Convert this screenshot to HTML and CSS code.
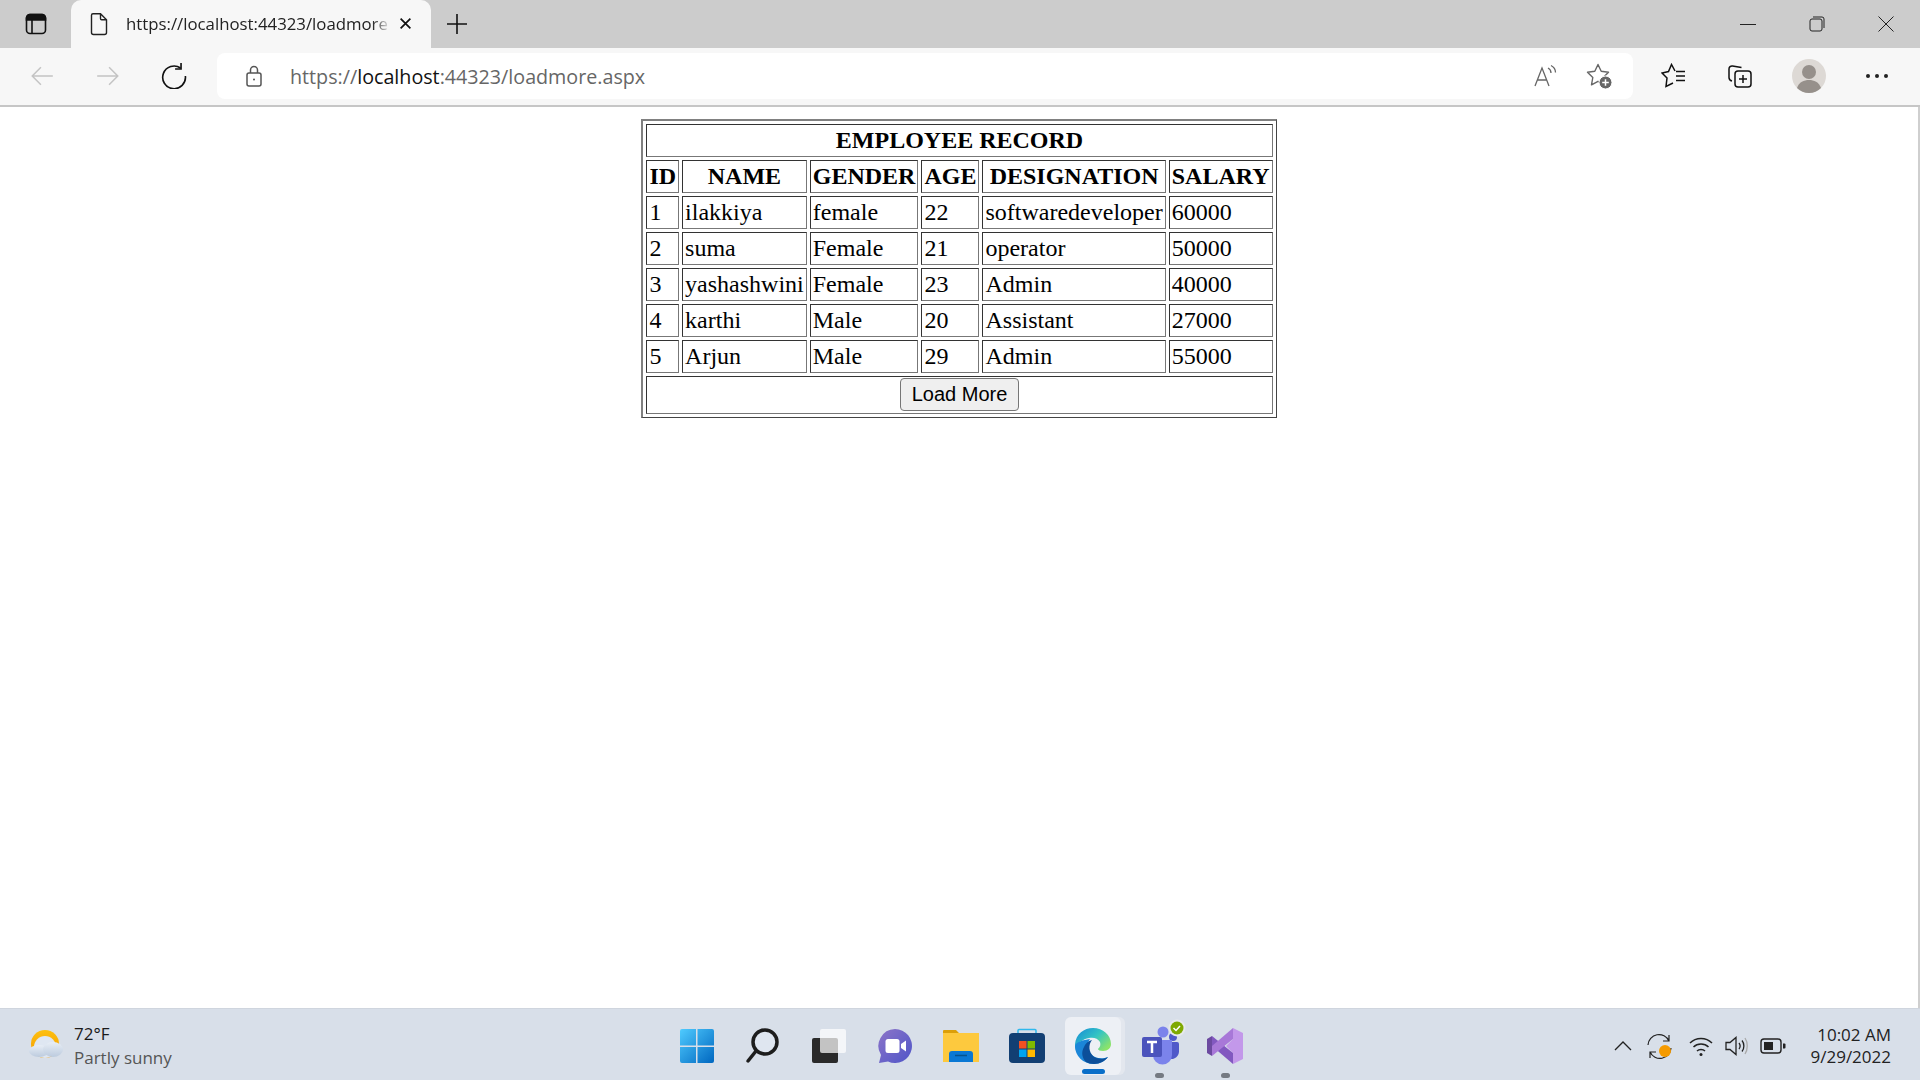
FILE: index.html
```html
<!DOCTYPE html>
<html lang="en">
<head>
<meta charset="utf-8">
<title>Load More</title>
<link rel="stylesheet" href="styles.css">
</head>
<body>
<div class="window">
  <header class="tabstrip">
    <div class="tab-actions">
      <svg class="ico-24" viewBox="0 0 24 24" fill="none" stroke="#111" stroke-width="1.6"><rect x="2.500" y="2.500" width="19" height="19" rx="3.500"/><path d="M2.500 6a3.500 3.500 0 0 1 3.500-3.500h12a3.500 3.500 0 0 1 3.500 3.500v2h-19z" fill="#111"/><path d="M8 8v13.500"/></svg>
    </div>
    <div class="tab">
      <svg class="ico-24 tab-doc" viewBox="0 0 24 24" fill="none" stroke="#222" stroke-width="1.4"><path d="M6 1.700h7.500L19.500 7.700V20.500a2 2 0 0 1-2 2H6.500a2 2 0 0 1-2-2V3.200a1.500 1.500 0 0 1 1.500-1.500zM13.500 1.700V6.500a1.200 1.200 0 0 0 1.200 1.200H19.500"/></svg>
      <span class="tab-title">https://localhost:44323/loadmore</span>
      <svg class="ico-close" viewBox="0 0 12 12" fill="none" stroke="#111" stroke-width="1.6"><path d="M1.500 1.500l9 9M10.500 1.500l-9 9"/></svg>
    </div>
    <svg class="ico-new" viewBox="0 0 24 24" fill="none" stroke="#111" stroke-width="1.6"><path d="M12 2v20M2 12h20"/></svg>
    <div class="win-controls">
      <svg class="win-ico" viewBox="0 0 16 16" fill="none" stroke="#222" stroke-width="1"><path d="M0 8.500h16"/></svg>
      <svg class="win-ico" viewBox="0 0 16 16" fill="none" stroke="#222" stroke-width="1"><rect x="1" y="3" width="12" height="12" rx="2"/><path d="M4 1h9a2 2 0 0 1 2 2v9"/></svg>
      <svg class="win-ico" viewBox="0 0 16 16" fill="none" stroke="#222" stroke-width="1"><path d="M.5.500l15 15M15.500.500l-15 15"/></svg>
    </div>
  </header>
  <nav class="toolbar">
    <svg class="tool tool-dim" viewBox="0 0 24 24" fill="none" stroke="#c4c4c4" stroke-width="1.4"><path d="M22 12H3M11 4l-8 8 8 8"/></svg>
    <svg class="tool tool-dim" viewBox="0 0 24 24" fill="none" stroke="#c4c4c4" stroke-width="1.4"><path d="M2 12h19M13 4l8 8-8 8"/></svg>
    <svg class="tool" viewBox="0 0 24 24" fill="none" stroke="#111" stroke-width="1.500"><path d="M18 4.600A10.500 10.500 0 1 0 22.500 12"/><path d="M18.500 0v5.500H13"/></svg>
    <div class="addressbar">
      <svg class="lock" viewBox="0 0 20 24" fill="none" stroke="#555" stroke-width="1.500"><rect x="3" y="9" width="14" height="13" rx="2"/><path d="M6.500 9V6a3.500 3.500 0 0 1 7 0v3"/><circle cx="10" cy="15.500" r="1" fill="#555" stroke="none"/></svg>
      <div class="url"><span class="dim">https://</span>localhost<span class="dim">:44323/loadmore.aspx</span></div>
      <svg class="tool-in" viewBox="0 0 26 26" fill="none" stroke="#666" stroke-width="1.300"><path d="M2 23L9 5l7 18M4.500 17h9"/><path d="M15 5c2 1 3 3 3 5M18 2.500c3 1.500 4.500 4 4.500 7"/></svg>
      <svg class="tool-in" viewBox="0 0 26 26" fill="none" stroke="#666" stroke-width="1.400"><path d="M12 1.500l3.200 6.800 7.300 1-5.300 5.200 1.300 7.300-6.500-3.500-6.500 3.500 1.300-7.300L1.500 9.300l7.300-1z" stroke-linejoin="round"/><circle cx="19.500" cy="19.500" r="6.500" fill="#666" stroke="#fff" stroke-width="1"/><path d="M19.500 16.200v6.600M16.200 19.500h6.600" stroke="#fff" stroke-width="1.500"/></svg>
    </div>
    <svg class="tool tool-r1" viewBox="0 0 26 26" fill="none" stroke="#111" stroke-width="1.500"><path d="M14 8L10.500 1.500 7.500 8.500 1 10l5 5-1 8.500 7-3.500"/><path d="M15 8.500h9M15 13h9M15 17.500h9"/></svg>
    <svg class="tool tool-r2" viewBox="0 0 26 26" fill="none" stroke="#111" stroke-width="1.500"><path d="M5 18c-2-.500-3-2-3-3.500V6a3 3 0 0 1 3.500-3l9 1.500"/><rect x="8" y="8" width="16" height="16" rx="3"/><path d="M16 12v8M12 16h8"/></svg>
    <div class="avatar"><svg viewBox="0 0 34 34"><circle cx="17" cy="17" r="17" fill="#ddd9d5"/><circle cx="17" cy="13" r="7" fill="#96908b"/><path d="M5 29c2-6 7-8 12-8s10 2 12 8a17 17 0 0 1-24 0z" fill="#96908b"/></svg></div>
    <div class="dots"><i></i><i></i><i></i></div>
  </nav>
  <main class="page">
    <table class="records">
      <tr><th colspan="6">EMPLOYEE RECORD</th></tr>
      <tr><th>ID</th><th>NAME</th><th>GENDER</th><th>AGE</th><th>DESIGNATION</th><th>SALARY</th></tr>
      <tr><td>1</td><td>ilakkiya</td><td>female</td><td>22</td><td>softwaredeveloper</td><td>60000</td></tr>
      <tr><td>2</td><td>suma</td><td>Female</td><td>21</td><td>operator</td><td>50000</td></tr>
      <tr><td>3</td><td>yashashwini</td><td>Female</td><td>23</td><td>Admin</td><td>40000</td></tr>
      <tr><td>4</td><td>karthi</td><td>Male</td><td>20</td><td>Assistant</td><td>27000</td></tr>
      <tr><td>5</td><td>Arjun</td><td>Male</td><td>29</td><td>Admin</td><td>55000</td></tr>
      <tr><td colspan="6" class="more"><button class="load" type="button">Load More</button></td></tr>
    </table>
  </main>
  <footer class="taskbar">
    <div class="weather">
      <svg class="weather-ico" viewBox="0 0 36 30"><defs><linearGradient id="sun" x1="0" y1="0" x2="0" y2="1"><stop offset="0" stop-color="#fdc010"/><stop offset="1" stop-color="#f59a00"/></linearGradient><linearGradient id="cloud" x1="0" y1="0" x2="0" y2="1"><stop offset="0" stop-color="#e8eef6"/><stop offset="1" stop-color="#bccbde"/></linearGradient></defs><circle cx="17" cy="15" r="14" fill="url(#sun)"/><circle cx="17" cy="18" r="11" fill="#dfe7f2"/><ellipse cx="11" cy="22" rx="10" ry="6" fill="url(#cloud)"/><ellipse cx="25" cy="20.500" rx="10" ry="7.500" fill="url(#cloud)"/></svg>
      <div class="weather-text"><div class="temp">72°F</div><div class="cond">Partly sunny</div></div>
    </div>
    <div class="apps">
      <div class="app"><svg viewBox="0 0 36 36"><defs><linearGradient id="w" x1="0" y1="0" x2="1" y2="1"><stop offset="0" stop-color="#4fcbff"/><stop offset="1" stop-color="#0067c0"/></linearGradient></defs><path d="M1 3a2 2 0 0 1 2-2h14v16.500H1zM18.500 1H33a2 2 0 0 1 2 2v14.500H18.500zM1 19h16v16H3a2 2 0 0 1-2-2zM18.500 19H35v14a2 2 0 0 1-2 2H18.500z" fill="url(#w)"/></svg></div>
      <div class="app"><svg viewBox="0 0 36 36" fill="none" stroke="#1d1d1d" stroke-width="3.500" stroke-linecap="round"><circle cx="20" cy="14" r="12" fill="#dfe6f0"/><path d="M11 23L3 33"/></svg></div>
      <div class="app"><svg viewBox="0 0 36 36"><rect x="1" y="10" width="26" height="25" rx="2" fill="#2a2a2a"/><rect x="9" y="1" width="26" height="24" rx="2" fill="#fff" fill-opacity=".72"/></svg></div>
      <div class="app"><svg viewBox="0 0 36 36"><defs><linearGradient id="c" x1="0" y1="0" x2="1" y2="1"><stop offset="0" stop-color="#8c74c8"/><stop offset="1" stop-color="#4f55c8"/></linearGradient></defs><path d="M18 1a17 17 0 1 1-7 32.500L2 35l2-8A17 17 0 0 1 18 1z" fill="url(#c)"/><rect x="8.500" y="11" width="14" height="14" rx="2.500" fill="#fff"/><path d="M24 16l5-3.500v11L24 20z" fill="#fff"/></svg></div>
      <div class="app"><svg viewBox="0 0 36 36"><path d="M0 3a1 1 0 0 1 1-1h12l3 3h20v6H0z" fill="#dc9f09"/><path d="M0 5h36v29H0z" fill="#fdc93e"/><path d="M6 34v-8a3 3 0 0 1 3-3h18a3 3 0 0 1 3 3v8z" fill="#0a78d4"/><path d="M12 27.500h12" stroke="#05538f" stroke-width="1.500"/></svg></div>
      <div class="app"><svg viewBox="0 0 36 36"><path d="M9 6V2.500a1 1 0 0 1 1-1h16a1 1 0 0 1 1 1V6" fill="none" stroke="#2fb8ed" stroke-width="1.500"/><rect y="5" width="36" height="30" rx="4" fill="#123f73"/><rect x="10" y="13" width="7.500" height="7.500" fill="#f25022"/><rect x="18.500" y="13" width="7.500" height="7.500" fill="#7fba00"/><rect x="10" y="21.500" width="7.500" height="7.500" fill="#00a4ef"/><rect x="18.500" y="21.500" width="7.500" height="7.500" fill="#ffb900"/></svg></div>
      <div class="app app-active"><svg viewBox="0 0 36 36"><defs><linearGradient id="e1" x1="0" y1="0" x2="1" y2=".7"><stop offset="0" stop-color="#1488d8"/><stop offset=".55" stop-color="#33c4c4"/><stop offset="1" stop-color="#8be36a"/></linearGradient></defs><path d="M0 16C1 6 9 0 18 0c10 0 18 7 18 16 0 4-3 7-8 7-3 0-5-1-5-2 2-2 3-4 2-7-2-4-7-5-11-4C8 11 2 15 0 22z" fill="url(#e1)"/><path d="M0 18c0 10 8 18 19 18 6 0 11-3 14-7-5 2-12 2-16-2-5-4-6-11-2-16C8 12 1 14 0 18z" fill="#1b86d8"/><path d="M11 34c-4-4-5-10-2-15 1-3 4-6 8-7-4 5-3 12 1 16 4 3 10 4 15 1-3 4-8 7-14 7-3 0-6-1-8-2z" fill="#0c4f9a"/></svg></div>
      <div class="app app-run"><svg class="teams" viewBox="0 0 46 46"><circle cx="23" cy="13" r="5.500" fill="#7b83eb"/><circle cx="33" cy="18" r="4" fill="#5059c9"/><path d="M28 23h9a2 2 0 0 1 2 2v8a8 8 0 0 1-12 6z" fill="#5059c9"/><path d="M13 21h19v15a9.500 9.500 0 0 1-19 0z" fill="#7b83eb"/><rect x="2" y="18" width="20" height="20" rx="2" fill="#4b53bc"/><path d="M7 23h10M12 23v11" stroke="#fff" stroke-width="2.500"/><circle cx="37" cy="9" r="8.500" fill="#e7e9ec"/><circle cx="37" cy="9" r="6.500" fill="#7fa900"/><path d="M33.500 9l2.500 2.500 4-4.500" fill="none" stroke="#fff" stroke-width="1.500"/></svg></div>
      <div class="app app-run"><svg viewBox="0 0 36 36"><path d="M26 0l10 5v26l-10 5zM26 11l-7 7 7 7z" fill="#c398ea" fill-rule="evenodd"/><path d="M0 11l5-3v20l-5-3z" fill="#6c4aa0"/><path d="M5 8l21 17v11L5 18z" fill="#8258c0"/><path d="M26 0L5 18v10L26 11z" fill="#a878d8"/></svg></div>
    </div>
    <div class="tray">
      <svg class="tray-chev" viewBox="0 0 20 20" fill="none" stroke="#222" stroke-width="1.300"><path d="M2 14l8-8 8 8"/></svg>
      <svg class="tray-sync" viewBox="0 0 28 28" fill="none" stroke="#222" stroke-width="1.200"><path d="M2 13a11 11 0 0 1 21-4M23 3v6h-6M25 16a11 11 0 0 1-21 4M4 26v-6h6"/><circle cx="19" cy="19" r="6" fill="#f59a00" stroke="none"/></svg>
      <svg class="tray-wifi" viewBox="0 0 24 24" fill="none" stroke="#222" stroke-width="1.500"><path d="M1 9c6-6 16-6 22 0M4.500 13c4-4 11-4 15 0M8 17c2-2 6-2 8 0"/><circle cx="12" cy="20.500" r="1.500" fill="#222" stroke="none"/></svg>
      <svg class="tray-vol" viewBox="0 0 24 24" fill="none" stroke="#222" stroke-width="1.300"><path d="M2 8.500v7h4l6 5v-17l-6 5zM15 9c1.500 2 1.500 4 0 6M18 6.500c2.500 3 2.500 8 0 11"/><path d="M21 4c3 4.500 3 11.500 0 16" stroke="#aaa"/></svg>
      <svg class="tray-batt" viewBox="0 0 26 18" fill="none" stroke="#222" stroke-width="1.400"><rect x="1" y="2" width="20" height="14" rx="3"/><rect x="4" y="5" width="9" height="8" fill="#222" stroke="none"/><path d="M23 6.500h1.500a1 1 0 0 1 1 1v3a1 1 0 0 1-1 1H23z" fill="#222" stroke="none"/></svg>
      <div class="clock"><div>10:02 AM</div><div>9/29/2022</div></div>
    </div>
  </footer>
</div>
</body>
</html>
```
FILE: styles.css
```css
* { box-sizing: border-box; }
html, body { margin: 0; height: 100%; }
body { font-family: "Open Sans", "Noto Sans", sans-serif; overflow: hidden; background: #fff; }
svg { display: block; flex: none; }
.window { width: 1920px; height: 1080px; display: flex; flex-direction: column; }

.tabstrip { height: 48px; background: #cccccc; display: flex; align-items: flex-start; flex: none; }
.tab-actions { width: 71px; height: 48px; display: flex; align-items: center; justify-content: center; }
.ico-24 { width: 24px; height: 24px; }
.tab { width: 360px; height: 48px; background: #f7f7f7; border-radius: 10px 10px 0 0; display: flex; align-items: center; padding: 0 19px 1px 16px; }
.tab-doc { margin-right: 15px; }
.tab-title { flex: none; font-size: 16.800px; color: #222; white-space: nowrap; -webkit-mask-image: linear-gradient(to right, #000 94%, rgba(0,0,0,.15) 100%); mask-image: linear-gradient(to right, #000 94%, rgba(0,0,0,.15) 100%); }
.ico-close { width: 13px; height: 13px; margin-left: auto; }
.ico-new { width: 24px; height: 24px; margin: 12px 0 0 14px; }
.win-controls { margin-left: auto; height: 48px; display: flex; align-items: center; gap: 53px; padding-right: 26px; }
.win-ico { width: 16px; height: 16px; }

.toolbar { height: 59px; background: #f7f7f7; border-bottom: 2px solid #c6c6c6; display: flex; align-items: center; flex: none; padding: 0 0 2px 29px; }
.tool { width: 26px; height: 26px; }
.tool-dim + .tool-dim { margin-left: 39px; }
.tool-dim + .tool { margin-left: 40px; }
.addressbar { width: 1416px; height: 46px; margin-left: 30px; background: #fff; border-radius: 8px; display: flex; align-items: center; padding: 0 21px 0 27px; }
.lock { width: 20px; height: 24px; }
.url { flex: 1; margin: 1px 0 0 26px; font-size: 19.700px; color: #111; white-space: nowrap; }
.dim { color: #666; }
.tool-in { width: 26px; height: 26px; }
.tool-in + .tool-in { margin-left: 27px; }
.tool-r1 { margin-left: 28px; }
.tool-r2 { margin-left: 40px; }
.avatar { width: 34px; height: 34px; margin-left: 39px; }
.dots { display: flex; gap: 5px; margin-left: 40px; }
.dots i { width: 4px; height: 4px; background: #222; border-radius: 50%; }

.page { flex: 1; min-height: 0; display: flex; flex-direction: column; align-items: center; padding-top: 12px; border-right: 2px solid #cfcfcf; }
.records { width: 635px; border-style: solid; border-width: 2px 1px 1px 2px; border-color: #808080 #444 #444 #808080; border-spacing: 3px; font-family: "Liberation Serif", serif; font-size: 24px; line-height: 27px; color: #000; }
.records th, .records td { border: 1px solid; border-color: #333 #777 #777 #333; padding: 2px; }
.records td { text-align: left; }
.records .more { text-align: center; padding: 1px 2px 2px; }
.load { font-family: "Liberation Sans", sans-serif; font-size: 20px; line-height: 23px; height: 33px; padding: 0 11px; background: #efefef; border: 1px solid #767676; border-radius: 4px; color: #000; display: block; margin: 0 auto; }

.taskbar { height: 72px; flex: none; background: #d8dfe9; border-top: 1px solid #cfd5de; display: flex; align-items: center; position: relative; padding: 2px 29px 0 28px; }
.weather { display: flex; align-items: center; gap: 10px; width: 200px; }
.weather-ico { width: 36px; height: 30px; margin-top: -4px; }
.weather-text { font-size: 17px; line-height: 24px; }
.temp { color: #1a1a1a; }
.cond { color: #555; }
.apps { position: absolute; left: 664px; top: 2px; height: 70px; display: flex; align-items: center; }
.app { width: 66px; height: 58px; display: flex; align-items: center; justify-content: center; position: relative; }
.app svg { width: 36px; height: 36px; }
.app .teams { width: 46px; height: 46px; margin-top: -8px; margin-left: 8px; }
.app-active { background: #edf0f5; border-radius: 6px; box-shadow: 4px 0 0 #e3e7ee; width: 56px; margin: 0 5px; }
.app-active::after { content: ""; position: absolute; left: 17px; bottom: 1px; width: 23px; height: 5px; border-radius: 3px; background: #0a6fc9; }
.app-run::after { content: ""; position: absolute; left: 29px; bottom: -3px; width: 9px; height: 5px; border-radius: 3px; background: #757a82; }
.tray { margin-left: auto; display: flex; align-items: center; }
.tray-chev { width: 20px; height: 20px; }
.tray-sync { width: 28px; height: 28px; margin: 0 15px 0 13px; }
.tray-wifi { width: 24px; height: 24px; }
.tray-vol { width: 24px; height: 24px; margin-left: 11px; }
.tray-batt { width: 26px; height: 18px; margin-left: 12px; }
.clock { margin-left: 21px; width: 84px; font-size: 17px; line-height: 22px; color: #222; text-align: right; white-space: nowrap; }
```
